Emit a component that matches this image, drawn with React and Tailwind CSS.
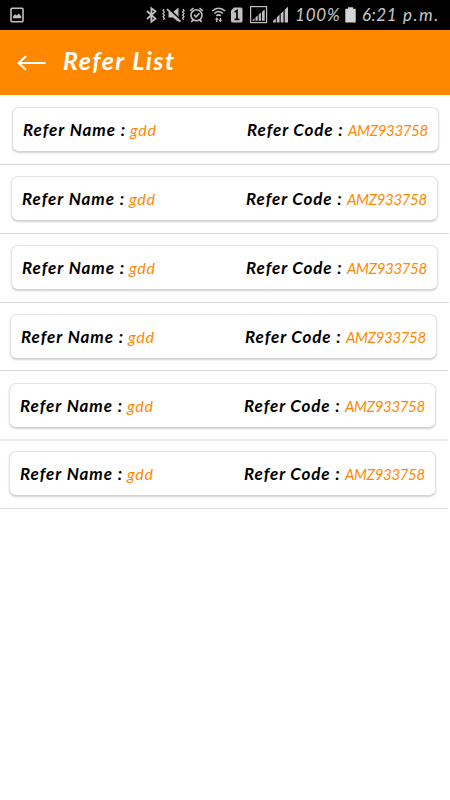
const rows = [
  { name: 'gdd', code: 'AMZ933758', box: 'h-[70px] pt-[12px] pl-[12px] border-b border-[#d8d8d8]' },
  { name: 'gdd', code: 'AMZ933758', box: 'h-[69px] w-[449px] pt-[11px] pl-[11px] border-b border-[#d8d8d8]' },
  { name: 'gdd', code: 'AMZ933758', box: 'h-[69px] w-[449px] pt-[11px] pl-[11px] border-b border-[#d8d8d8]' },
  { name: 'gdd', code: 'AMZ933758', box: 'h-[68px] w-[448px] pt-[11px] pl-[10px] border-b border-[#d8d8d8]' },
  { name: 'gdd', code: 'AMZ933758', box: 'h-[70px] w-[448px] pt-[12px] pl-[9px] border-b-2 border-[#e9e9e9]' },
  { name: 'gdd', code: 'AMZ933758', box: 'h-[68px] w-[448px] pt-[10px] pl-[9px] border-b border-[#dcdcdc]' },
];

function StatusIcons() {
  return (
    <svg width="450" height="30" viewBox="0 0 450 30" fill="none" stroke="#c0c0c0" strokeWidth="1.4">
      {/* picture */}
      <rect x="11" y="8.2" width="12" height="13.6" rx="1" strokeWidth="1.600" />
      <path d="M13 18.200v-2l2.200-2 1.600 1.400 2-2.200 2.400 2.800v2z" fill="#c0c0c0" stroke="none" />
      {/* bluetooth */}
      <path d="M147 11l8.400 7.600-4 3V8.400l4 3L147 19" strokeWidth="1.800" />
      {/* muted with vibration */}
      <path d="M164 9l-1 1.600 1.400 1.400-1.400 1.600 1.400 1.600-1.400 1.600 1.400 1.600-1 1.600M183 9l1 1.600-1.400 1.400 1.400 1.600-1.400 1.600 1.400 1.600-1.400 1.600 1 1.600" strokeWidth="1.300" />
      <path d="M168.500 12h4.500l5.500-4.500v14.500l-5.500-4.500h-4.500z" fill="#c0c0c0" stroke="none" />
      <path d="M168.500 8.300L181.500 20.600" stroke="#000" strokeWidth="1.600" />
      <path d="M167 9.200L180.500 21.700" strokeWidth="1.700" />
      {/* alarm */}
      <circle cx="196.500" cy="15.200" r="5.500" strokeWidth="1.600" />
      <path d="M194 14.800l2 2 3.500-3.500M190.200 10.800l3.300-2.800M202.800 10.800l-3.300-2.800M193 19.500l-1.500 2.500M200 19.500l1.500 2.500" strokeWidth="1.600" />
      {/* wifi */}
      <path d="M212.300 11c3.700-3.700 9-3.700 12.700 0M214.300 13.500c2.700-2.500 6-2.500 8.700 0M216.300 16c1.500-1.400 3-1.400 4.500 0" strokeWidth="1.600" />
      <path d="M216.800 22v-3.500M220.400 18v3.500" strokeWidth="1.300" />
      <path d="M214.900 19.700l1.900-2.500 1.900 2.500zM218.500 19.800l1.900 2.500 1.900-2.500z" fill="#c0c0c0" stroke="none" />
      {/* sim */}
      <path d="M234 7.500h7q1.500 0 1.500 1.500v12q0 1.500-1.500 1.500h-8.500q-1.500 0-1.500-1.500V10.500z" fill="#c0c0c0" stroke="none" />
      <path d="M234.500 12l2.500-1.500v9M234.500 19.300h5" stroke="#000" strokeWidth="1.700" />
      {/* boxed signal */}
      <rect x="250.600" y="6.600" width="16" height="16" strokeWidth="1.200" />
      <path d="M252.500 20.800v-.9l2-1.700v2.600zM255.500 20.800v-3.500l2.200-1.900v5.400zM258.700 20.800v-6.300l2.200-1.900v8.200zM262 20.800v-9l2.700-2.300v11.300z" fill="#c0c0c0" stroke="none" />
      {/* signal */}
      <path d="M273 22.500v-1.500l2.800-2.700v4.200zM276.800 22.500v-5.200l2.800-2.700v7.900zM280.700 22.500v-8.900l2.800-2.700v11.600zM284.700 22.500v-12.700l3.300-3v15.700z" fill="#c0c0c0" stroke="none" />
      {/* battery */}
      <path d="M345.300 8.800h2.700v-1.500h5v1.500h2.700v13.700h-10.400z" fill="#d6d6d6" stroke="none" />
    </svg>
  );
}

function StatusBar() {
  return (
    <div className="relative h-[30px] bg-black text-[17px] leading-[22px] text-[#c8c8c8]">
      <StatusIcons />
      <span className="absolute left-[295px] top-[4px] whitespace-nowrap tracking-[0.8px]">100%</span>
      <span className="absolute left-[362px] top-[4px] whitespace-nowrap tracking-[0.5px]">6:21</span>
      <span className="absolute left-[403px] top-[4px] whitespace-nowrap tracking-[1.6px]">p.m.</span>
    </div>
  );
}

function ReferCard({ name, code }) {
  return (
    <div className="flex h-[45px] w-[427px] items-baseline rounded-[7px] border border-[#e4e4e4] border-b-[#d2d2d2] bg-white pt-[9px] pl-[10px] shadow-[0_1px_2px_rgba(0,0,0,0.18)]">
      <span className="w-[107px] whitespace-nowrap text-[17px] font-bold tracking-[0.95px] text-black">Refer Name :</span>
      <span className="w-[117px] whitespace-nowrap text-[16px] tracking-[0.8px] text-[#ff8800]">{name}</span>
      <span className="w-[101px] whitespace-nowrap text-[17px] font-bold tracking-[0.9px] text-black">Refer Code :</span>
      <span className="whitespace-nowrap text-[15px] tracking-[-0.35px] text-[#ff8800]">{code}</span>
    </div>
  );
}

export default function App() {
  return (
    <div className="h-[800px] w-[450px] overflow-hidden bg-white font-['Lato',sans-serif] italic">
      <StatusBar />
      <header className="flex h-[65px] items-center bg-[#ff8800] pl-[17px] text-white">
        <svg width="29" height="16" viewBox="0 0 29 16" fill="none" stroke="currentColor" strokeWidth="2">
          <path d="M28.500 8H2M9 1.200L1.500 8 9 14.800" />
        </svg>
        <h1 className="-mt-[4px] ml-[17px] whitespace-nowrap text-[25px] font-bold tracking-[1.500px]">Refer List</h1>
      </header>
      <main>
        {rows.map((row, i) => (
          <div key={i} className={row.box}>
            <ReferCard name={row.name} code={row.code} />
          </div>
        ))}
      </main>
    </div>
  );
}
